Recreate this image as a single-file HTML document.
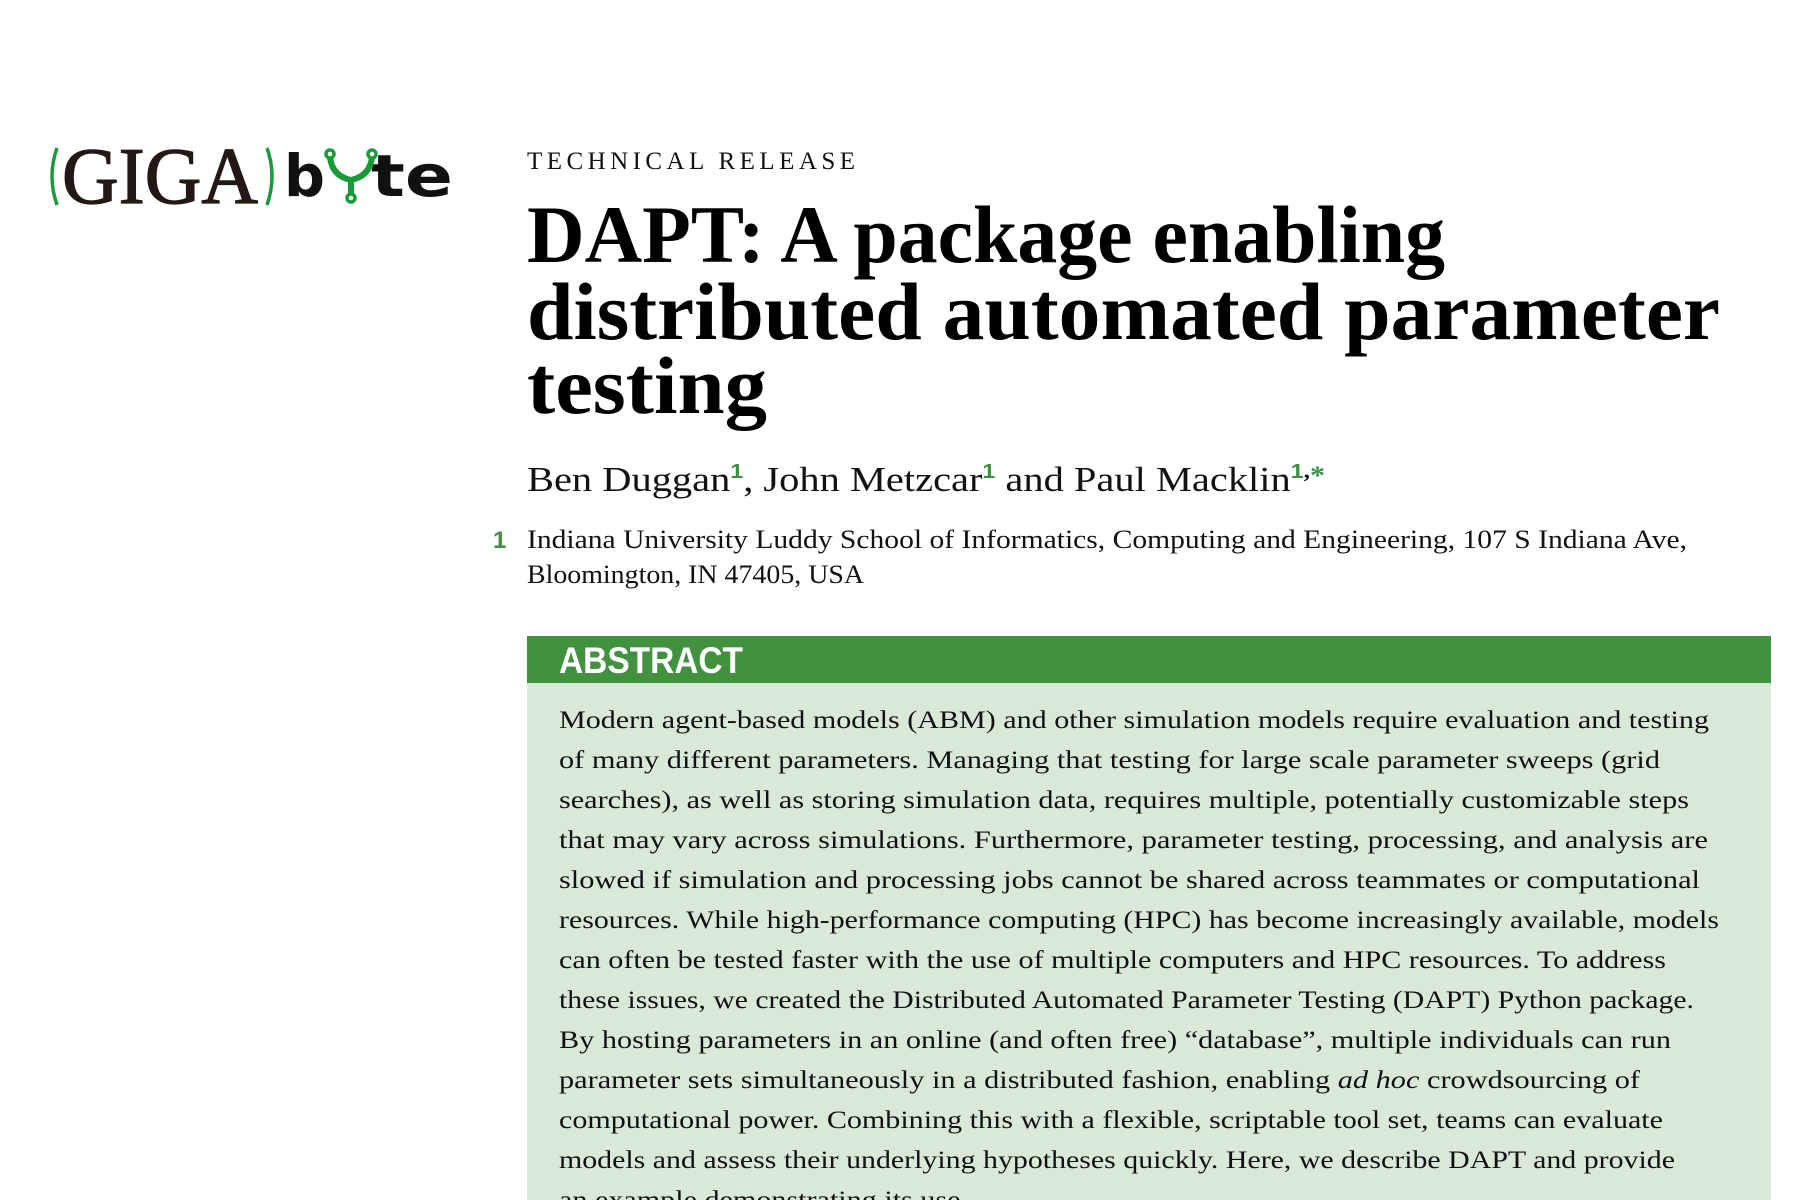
<!DOCTYPE html>
<html><head><meta charset="utf-8"><style>
html,body{margin:0;padding:0;background:#fff;width:1800px;height:1200px;overflow:hidden}
svg{display:block}
</style></head><body>
<svg width="1800" height="1200" viewBox="0 0 1800 1200" xmlns="http://www.w3.org/2000/svg">
<rect width="1800" height="1200" fill="#fff"/>
<!-- logo -->
<path d="M57 148 Q47 176 57 205" stroke="#1a9a3a" stroke-width="3.5" fill="none"/>
<text x="62" y="203" font-family="Liberation Serif, serif" font-size="80" fill="#231816" stroke="#231816" stroke-width="1.3" textLength="196" lengthAdjust="spacingAndGlyphs">GIGA</text>
<path d="M267 148 Q277 176 267 205" stroke="#1a9a3a" stroke-width="3.5" fill="none"/>
<text x="284" y="196" font-family="DejaVu Sans, sans-serif" font-weight="bold" font-size="58" fill="#111" textLength="41" lengthAdjust="spacingAndGlyphs">b</text>
<text x="371" y="196" font-family="DejaVu Sans, sans-serif" font-weight="bold" font-size="58" fill="#111" textLength="82" lengthAdjust="spacingAndGlyphs">te</text>
<g stroke="#1a9a3a" stroke-width="6" fill="none" stroke-linecap="round">
<path d="M330 157 Q332 176 351 180 Q370 176 372 157"/>
<path d="M351 180 L351 194"/>
<circle cx="330" cy="154" r="4" fill="#fff" stroke-width="3.5"/>
<circle cx="372" cy="154" r="4" fill="#fff" stroke-width="3.5"/>
<circle cx="351" cy="198" r="4" fill="#fff" stroke-width="3.5"/>
</g>
<!-- header -->
<text x="527" y="169" font-family="Liberation Serif, serif" font-size="25" fill="#111" textLength="328" lengthAdjust="spacing">TECHNICAL RELEASE</text>
<g font-family="Liberation Serif, serif" font-weight="bold" font-size="82" fill="#000">
<text x="527" y="262" textLength="918" lengthAdjust="spacingAndGlyphs">DAPT: A package enabling</text>
<text x="527" y="339" textLength="1193" lengthAdjust="spacingAndGlyphs">distributed automated parameter</text>
<text x="527" y="413" textLength="240" lengthAdjust="spacingAndGlyphs">testing</text>
</g>
<text x="527" y="491" font-family="Liberation Serif, serif" font-size="35" fill="#111" textLength="798" lengthAdjust="spacingAndGlyphs">Ben Duggan<tspan fill="#3f8f43" font-family="Liberation Sans, sans-serif" font-weight="bold" font-size="20" dy="-13">1</tspan><tspan dy="13">, John Metzcar</tspan><tspan fill="#3f8f43" font-family="Liberation Sans, sans-serif" font-weight="bold" font-size="20" dy="-13">1</tspan><tspan dy="13"> and Paul Macklin</tspan><tspan fill="#3f8f43" font-family="Liberation Sans, sans-serif" font-weight="bold" font-size="20" dy="-13">1</tspan><tspan font-size="22" font-weight="bold">,</tspan><tspan fill="#3f8f43" font-size="26" font-weight="bold" dy="6">*</tspan></text>
<text x="493" y="548" font-family="Liberation Sans, sans-serif" font-weight="bold" font-size="24" fill="#3f8f43">1</text>
<g font-family="Liberation Serif, serif" font-size="26" fill="#111">
<text x="527" y="548" textLength="1160" lengthAdjust="spacingAndGlyphs">Indiana University Luddy School of Informatics, Computing and Engineering, 107 S Indiana Ave,</text>
<text x="527" y="583" textLength="337" lengthAdjust="spacingAndGlyphs">Bloomington, IN 47405, USA</text>
</g>
<!-- abstract -->
<rect x="527" y="636" width="1244" height="47" fill="#42913f"/>
<rect x="527" y="683" width="1244" height="517" fill="#dae8da"/>
<text x="559" y="673" font-family="Liberation Sans, sans-serif" font-weight="bold" font-size="37" fill="#fff" textLength="184" lengthAdjust="spacingAndGlyphs">ABSTRACT</text>
<g font-family="Liberation Serif, serif" font-size="25" fill="#111">
<text x="559" y="728" textLength="1150" lengthAdjust="spacingAndGlyphs">Modern agent-based models (ABM) and other simulation models require evaluation and testing</text>
<text x="559" y="768" textLength="1101" lengthAdjust="spacingAndGlyphs">of many different parameters. Managing that testing for large scale parameter sweeps (grid</text>
<text x="559" y="808" textLength="1130" lengthAdjust="spacingAndGlyphs">searches), as well as storing simulation data, requires multiple, potentially customizable steps</text>
<text x="559" y="848" textLength="1149" lengthAdjust="spacingAndGlyphs">that may vary across simulations. Furthermore, parameter testing, processing, and analysis are</text>
<text x="559" y="888" textLength="1141" lengthAdjust="spacingAndGlyphs">slowed if simulation and processing jobs cannot be shared across teammates or computational</text>
<text x="559" y="928" textLength="1160" lengthAdjust="spacingAndGlyphs">resources. While high-performance computing (HPC) has become increasingly available, models</text>
<text x="559" y="968" textLength="1107" lengthAdjust="spacingAndGlyphs">can often be tested faster with the use of multiple computers and HPC resources. To address</text>
<text x="559" y="1008" textLength="1135" lengthAdjust="spacingAndGlyphs">these issues, we created the Distributed Automated Parameter Testing (DAPT) Python package.</text>
<text x="559" y="1048" textLength="1112" lengthAdjust="spacingAndGlyphs">By hosting parameters in an online (and often free) “database”, multiple individuals can run</text>
<text x="559" y="1088" textLength="1081" lengthAdjust="spacingAndGlyphs">parameter sets simultaneously in a distributed fashion, enabling <tspan font-style="italic">ad hoc</tspan> crowdsourcing of</text>
<text x="559" y="1128" textLength="1104" lengthAdjust="spacingAndGlyphs">computational power. Combining this with a flexible, scriptable tool set, teams can evaluate</text>
<text x="559" y="1168" textLength="1116" lengthAdjust="spacingAndGlyphs">models and assess their underlying hypotheses quickly. Here, we describe DAPT and provide</text>
<text x="559" y="1208" textLength="409" lengthAdjust="spacingAndGlyphs">an example demonstrating its use.</text>
</g>
</svg>
</body></html>
